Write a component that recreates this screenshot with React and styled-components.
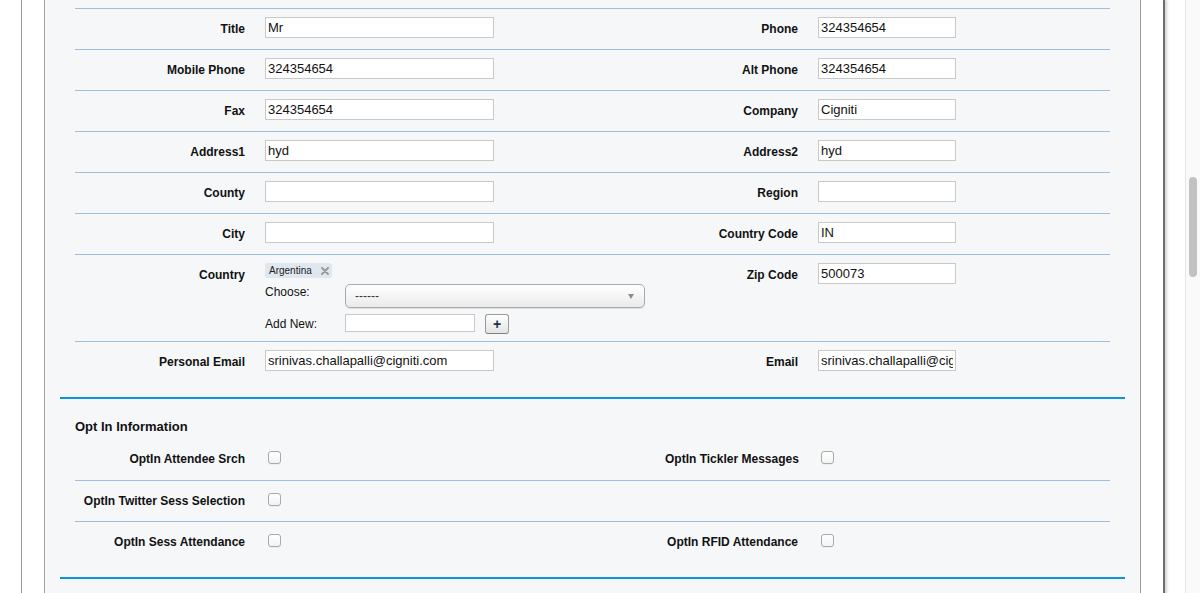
import React from "react";
import styled, { createGlobalStyle } from "styled-components";

const GlobalStyle = createGlobalStyle`
  html, body {
    margin: 0;
    padding: 0;
    background: #fff;
    font-family: "Liberation Sans", Arial, Helvetica, sans-serif;
    color: #111;
  }
`;

const contactRows = [
  ["Title", "Mr", "Phone", "324354654"],
  ["Mobile Phone", "324354654", "Alt Phone", "324354654"],
  ["Fax", "324354654", "Company", "Cigniti"],
  ["Address1", "hyd", "Address2", "hyd"],
  ["County", "", "Region", ""],
  ["City", "", "Country Code", "IN"],
];

const optRows = [
  ["OptIn Attendee Srch", "OptIn Tickler Messages"],
  ["OptIn Twitter Sess Selection", null],
  ["OptIn Sess Attendance", "OptIn RFID Attendance"],
];

const Screen = styled.div`
  display: flex;
  height: 100vh;
  overflow: hidden;
`;

const Viewport = styled.div`
  flex: 1;
  padding-left: 21px;
`;

const Window = styled.div`
  width: 1144px;
  min-height: 100%;
  background: #fff;
  border-left: 1px solid #9a9a9a;
  border-right: 2px solid #6d6d6d;
  box-shadow: 2px 0 3px rgba(0, 0, 0, 0.18);
  padding: 0 22px;
  box-sizing: border-box;
`;

const Panel = styled.div`
  background: #f5f7f9;
  border-left: 1px solid #a3a3a3;
  border-right: 1px solid #9a9a9a;
  padding: 8px 15px 40px;
  min-height: 600px;
  box-sizing: border-box;
`;

const Section = styled.section`
  padding: 0 15px 15px;
  border-bottom: 2px solid #0d93d8;
`;

const SectionTitle = styled.h3`
  margin: 0;
  padding: 20px 0 4px;
  font-size: 13px;
  line-height: 16px;
  font-weight: bold;
  color: #111;
`;

const Row = styled.div`
  display: grid;
  grid-template-columns: 170px 380px 133px 1fr;
  column-gap: 20px;
  align-items: start;
  min-height: 41px;
  padding: 8px 0 11px;
  box-sizing: border-box;
  border-top: 1px solid #9fbfdf;

  ${SectionTitle} + & {
    border-top: none;
  }
`;

const Label = styled.label`
  text-align: right;
  white-space: nowrap;
  font-size: 12px;
  line-height: 14px;
  font-weight: bold;
  padding-top: 5px;
  color: #111;
`;

const Field = styled.div`
  min-width: 0;
`;

const TextInput = styled.input`
  display: block;
  width: ${(p) => p.$width}px;
  height: ${(p) => p.$height || 21}px;
  box-sizing: border-box;
  border: 1px solid #c9c9c9;
  background: #fff;
  padding: 0 2px;
  font-family: "Liberation Sans", Arial, sans-serif;
  font-size: 13px;
  color: #111;
  outline: none;
`;

const CheckBox = styled.input.attrs({ type: "checkbox" })`
  appearance: none;
  display: block;
  width: 13px;
  height: 13px;
  margin: 4px 0 0 3px;
  box-sizing: border-box;
  border: 1px solid #a9a9a9;
  border-radius: 3px;
  background: linear-gradient(#fff, #f3f3f3);
  box-shadow: 0 1px 0 rgba(0, 0, 0, 0.04);
`;

const Chip = styled.span`
  display: flex;
  width: fit-content;
  align-items: center;
  gap: 9px;
  height: 15px;
  padding: 0 3px 0 4px;
  border-radius: 3px;
  background: #dfe7ef;
  font-size: 10px;
  color: #222;
`;

const ChoiceGrid = styled.div`
  display: grid;
  grid-template-columns: 80px 300px;
  row-gap: 6px;
  align-items: center;
  margin-top: 6px;
  margin-bottom: -4px;
`;

const ChoiceLabel = styled.span`
  font-size: 12px;
  color: #111;
  align-self: start;
  padding-top: ${(p) => p.$pad}px;
`;

const Chosen = styled.div`
  display: flex;
  align-items: center;
  justify-content: space-between;
  height: 24px;
  box-sizing: border-box;
  padding: 0 10px 0 9px;
  border: 1px solid #aaa;
  border-radius: 5px;
  background: linear-gradient(#ffffff 0%, #f6f6f6 45%, #eaeaea 100%);
  box-shadow: 0 1px 1px rgba(0, 0, 0, 0.1);
  font-size: 12px;
  color: #333;
`;

const Arrow = styled.span`
  width: 0;
  height: 0;
  border-left: 3.5px solid transparent;
  border-right: 3.5px solid transparent;
  border-top: 5px solid #8a8a8a;
`;

const AddLine = styled.div`
  display: flex;
  align-items: flex-start;
  gap: 10px;
`;

const PlusButton = styled.button`
  width: 24px;
  height: 20px;
  box-sizing: border-box;
  padding: 0;
  border: 1px solid #9a9a9a;
  border-bottom-color: #7f7f7f;
  border-radius: 3px;
  background: linear-gradient(#ffffff, #e4e4e4);
  font-family: "Liberation Sans", Arial, sans-serif;
  font-size: 14px;
  font-weight: bold;
  line-height: 17px;
  color: #17324f;
`;

const ScrollTrack = styled.div`
  width: 14px;
  background: #fafafa;
  border-left: 1px solid #e6e6e6;
  padding-top: 177px;
  display: flex;
  justify-content: center;
`;

const ScrollThumb = styled.div`
  width: 8px;
  height: 100px;
  border-radius: 4px;
  background: #c2c2c2;
`;

const CloseIcon = () => (
  <svg width="8" height="8" viewBox="0 0 8 8">
    <path d="M1 1 L7 7 M7 1 L1 7" stroke="#9a9a9a" strokeWidth="2" strokeLinecap="round" />
  </svg>
);

const App = () => {
  return (
    <>
      <GlobalStyle />
      <Screen>
        <Viewport>
          <Window>
            <Panel>
              <Section>
                {contactRows.map(([l1, v1, l2, v2]) => (
                  <Row key={l1}>
                    <Label>{l1}</Label>
                    <Field>
                      <TextInput $width={229} defaultValue={v1} />
                    </Field>
                    <Label>{l2}</Label>
                    <Field>
                      <TextInput $width={138} defaultValue={v2} />
                    </Field>
                  </Row>
                ))}
                <Row>
                  <Label>Country</Label>
                  <Field>
                    <Chip>
                      Argentina
                      <CloseIcon />
                    </Chip>
                    <ChoiceGrid>
                      <ChoiceLabel $pad={1}>Choose:</ChoiceLabel>
                      <Chosen>
                        <span>------</span>
                        <Arrow />
                      </Chosen>
                      <ChoiceLabel $pad={3}>Add New:</ChoiceLabel>
                      <AddLine>
                        <TextInput $width={130} $height={18} />
                        <PlusButton>+</PlusButton>
                      </AddLine>
                    </ChoiceGrid>
                  </Field>
                  <Label>Zip Code</Label>
                  <Field>
                    <TextInput $width={138} defaultValue="500073" />
                  </Field>
                </Row>
                <Row>
                  <Label>Personal Email</Label>
                  <Field>
                    <TextInput $width={229} defaultValue="srinivas.challapalli@cigniti.com" />
                  </Field>
                  <Label>Email</Label>
                  <Field>
                    <TextInput $width={138} defaultValue="srinivas.challapalli@cigniti.com" />
                  </Field>
                </Row>
              </Section>
              <Section>
                <SectionTitle>Opt In Information</SectionTitle>
                {optRows.map(([l1, l2]) => (
                  <Row key={l1}>
                    <Label>{l1}</Label>
                    <Field>
                      <CheckBox />
                    </Field>
                    <Label>{l2}</Label>
                    <Field>{l2 && <CheckBox />}</Field>
                  </Row>
                ))}
              </Section>
            </Panel>
          </Window>
        </Viewport>
        <ScrollTrack>
          <ScrollThumb />
        </ScrollTrack>
      </Screen>
    </>
  );
};

export default App;
